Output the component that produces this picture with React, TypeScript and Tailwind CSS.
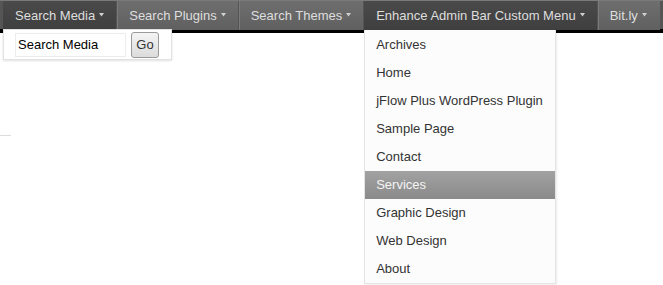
import React from "react";

const menuItems = [
  "Archives",
  "Home",
  "jFlow Plus WordPress Plugin",
  "Sample Page",
  "Contact",
  "Services",
  "Graphic Design",
  "Web Design",
  "About",
];

function Arrow() {
  return (
    <svg width="5" height="4" viewBox="0 0 5 4" className="mb-[2px]">
      <path d="M0 0 H5 L2.5 3.5 Z" fill="#d0d0d0" />
    </svg>
  );
}

function BarItem({
  label,
  active,
  first,
  children,
}: {
  label: string;
  active?: boolean;
  first?: boolean;
  children?: React.ReactNode;
}) {
  return (
    <div
      className={`relative h-[29px] flex items-center gap-[4px] pl-3 pr-3 ${
        first ? "" : "border-l border-[#545454]"
      } ${
        active
          ? "bg-gradient-to-b from-[#4a4a4a] to-[#3f3f3f]"
          : "bg-gradient-to-b from-[#6e6e6e] to-[#606060] shadow-[inset_1px_0_0_#7a7a7a]"
      }`}
    >
      <span className="text-[13px] text-[#dedede] whitespace-nowrap">{label}</span>
      <Arrow />
      {children}
    </div>
  );
}

export default function App() {
  return (
    <div className="relative w-[663px] h-[285px] bg-white overflow-hidden font-['Liberation_Sans',Arial,sans-serif]">
      {/* Admin bar */}
      <div className="flex h-[33px] pl-[3px] pr-[3px] bg-[#555] border-t border-[#7a7a7a] border-b-4 border-b-black box-border">
        <BarItem label="Search Media" active first>
          <div className="absolute left-0 top-[28px] z-10 w-[169px] h-[31px] bg-white border border-[#e2e2e2] shadow-[0_1px_2px_rgba(0,0,0,0.12)] flex items-start pl-[11px] pt-[2px] gap-[5px]">
            <div className="w-[111px] h-[24px] mt-px border border-[#ececec] flex items-center pl-[2px] text-[13px] text-black">
              Search Media
            </div>
            <button className="w-[28px] h-[26px] border border-[#9a9a9a] rounded-[3px] bg-gradient-to-b from-[#f4f4f4] to-[#dcdcdc] text-[13px] text-[#333] flex items-center justify-center">
              Go
            </button>
          </div>
        </BarItem>
        <BarItem label="Search Plugins" />
        <BarItem label="Search Themes" />
        <BarItem label="Enhance Admin Bar Custom Menu" active>
          <div className="absolute left-0 top-[29px] z-10 w-[192px] bg-[#fcfcfc] border border-[#e4e4e4] border-t-0 pt-[1px] shadow-[1px_1px_2px_rgba(0,0,0,0.08)]">
            {menuItems.map((item) => (
              <div
                key={item}
                className={`h-[28px] flex items-center pl-[11px] text-[13px] ${
                  item === "Services"
                    ? "bg-gradient-to-b from-[#a2a2a2] to-[#8a8a8a] text-[#f4f4f4]"
                    : "text-[#333]"
                }`}
              >
                {item}
              </div>
            ))}
          </div>
        </BarItem>
        <div className="flex-1 flex">
          <BarItem label="Bit.ly" />
          <div className="flex-1 h-[29px] bg-gradient-to-b from-[#6e6e6e] to-[#606060]" />
        </div>
      </div>

      {/* Page content remnant */}
      <div className="mt-[102px] h-px w-[11px] bg-[#dcdcdc]" />
    </div>
  );
}
